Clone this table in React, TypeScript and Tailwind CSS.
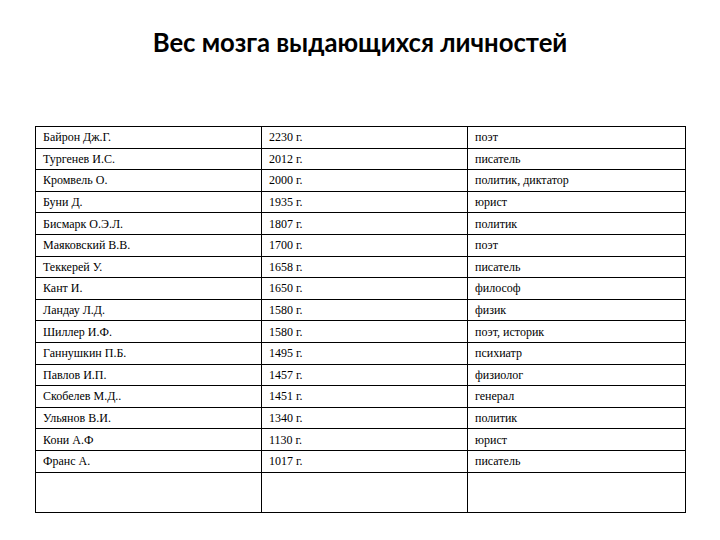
import React from "react";

const rows: [string, string, string][] = [
  ["Байрон Дж.Г.", "2230 г.", "поэт"],
  ["Тургенев И.С.", "2012 г.", "писатель"],
  ["Кромвель О.", "2000 г.", "политик, диктатор"],
  ["Буни Д.", "1935 г.", "юрист"],
  ["Бисмарк О.Э.Л.", "1807 г.", "политик"],
  ["Маяковский В.В.", "1700 г.", "поэт"],
  ["Теккерей У.", "1658 г.", "писатель"],
  ["Кант И.", "1650 г.", "философ"],
  ["Ландау Л.Д.", "1580 г.", "физик"],
  ["Шиллер И.Ф.", "1580 г.", "поэт, историк"],
  ["Ганнушкин П.Б.", "1495 г.", "психиатр"],
  ["Павлов И.П.", "1457 г.", "физиолог"],
  ["Скобелев М.Д..", "1451 г.", "генерал"],
  ["Ульянов В.И.", "1340 г.", "политик"],
  ["Кони А.Ф", "1130 г.", "юрист"],
  ["Франс А.", "1017 г.", "писатель"],
];

export default function App() {
  return (
    <div className="w-[720px] h-[540px] bg-white overflow-hidden">
      <h1 className="pt-[24px] h-[126px] text-center font-['Lato','Open_Sans',sans-serif] font-bold text-[25.7px] leading-[36px] text-black">
        Вес мозга выдающихся личностей
      </h1>
      <table className="ml-[35px] w-[650px] border-collapse table-fixed font-['Liberation_Serif',serif] text-[12px] text-black">
        <colgroup>
          <col className="w-[226px]" />
          <col className="w-[206px]" />
          <col className="w-[218px]" />
        </colgroup>
        <tbody>
          {rows.map((r, i) => (
            <tr key={i} className="h-[21.6px]">
              {r.map((c, j) => (
                <td key={j} className="border border-black px-[7px] py-0 align-middle leading-none whitespace-nowrap">
                  {c}
                </td>
              ))}
            </tr>
          ))}
          <tr className="h-[40px]">
            <td className="border border-black" />
            <td className="border border-black" />
            <td className="border border-black" />
          </tr>
        </tbody>
      </table>
    </div>
  );
}
